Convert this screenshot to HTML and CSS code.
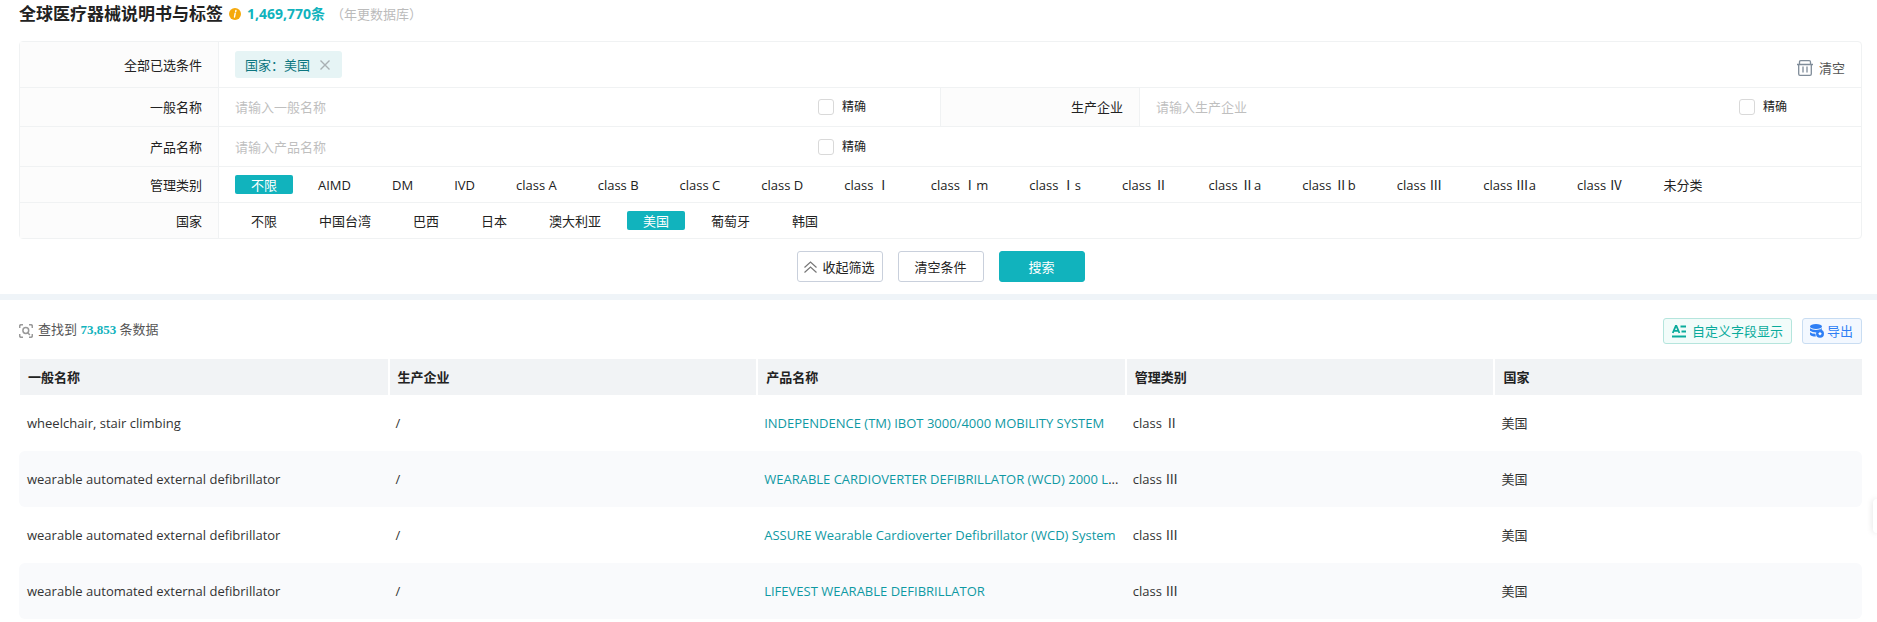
FILE: index.html
```html
<!DOCTYPE html>
<html lang="zh-CN">
  <head>
    <meta charset="UTF-8" />
    <meta name="viewport" content="width=device-width, initial-scale=1.0" />
    <title>全球医疗器械说明书与标签</title>
    <link rel="stylesheet" href="styles.css">
  </head>
  <body>
    <!-- Page title -->
    <header class="page-title">
      <h1>全球医疗器械说明书与标签</h1>
      <svg class="info-icon" width="12" height="12" viewBox="0 0 12 12">
        <circle cx="6" cy="6" r="6" fill="#f5a90c" />
        <path d="M6.9 2.5l-.2 1.1M6.2 5.1L5.5 9" stroke="#fff" stroke-width="1.4" stroke-linecap="round" />
      </svg>
      <strong class="total">1,469,770条</strong>
      <span class="note">（年更数据库）</span>
    </header>

    <!-- Search filters -->
    <form class="filter">
      <div class="filter-box">
        <div class="row row-selected">
          <div class="label">全部已选条件</div>
          <div class="cell cell-wide">
            <span class="tag">
              国家：美国
              <button type="button" class="tag-close" aria-label="移除">
                <svg width="10" height="10" viewBox="0 0 10 10">
                  <path d="M.5 .5l9 9M9.5 .5l-9 9" stroke="#a9b0b3" stroke-width="1.4" />
                </svg>
              </button>
            </span>
            <button type="button" class="clear">
              <svg width="16" height="16" viewBox="0 0 16 16" fill="none" stroke="#7f8c99" stroke-width="1.3">
                <path d="M0 4.5h16M2.5 4.5V2q0-1.300 1.300-1.300h8.400q1.300 0 1.300 1.300v2.500M1.700 4.500v9.500q0 1.300 1.300 1.300h10q1.300 0 1.300-1.300V4.500M6 6.500v6M10 6.500v6" />
              </svg>
              清空
            </button>
          </div>
        </div>

        <div class="row row-input">
          <label class="label" for="generic-name">一般名称</label>
          <div class="cell">
            <input type="text" id="generic-name" class="text-input" placeholder="请输入一般名称" />
            <label class="exact"><input type="checkbox" />精确</label>
          </div>
          <label class="label label-middle" for="company">生产企业</label>
          <div class="cell">
            <input type="text" id="company" class="text-input" placeholder="请输入生产企业" />
            <label class="exact"><input type="checkbox" />精确</label>
          </div>
        </div>

        <div class="row row-single">
          <label class="label" for="product-name">产品名称</label>
          <div class="cell">
            <input type="text" id="product-name" class="text-input" placeholder="请输入产品名称" />
            <label class="exact"><input type="checkbox" />精确</label>
          </div>
        </div>

        <div class="row row-option">
          <div class="label">管理类别</div>
          <div class="cell cell-wide cell-class">
            <button type="button" class="option active">不限</button>
            <button type="button" class="option">AIMD</button>
            <button type="button" class="option">DM</button>
            <button type="button" class="option">IVD</button>
            <button type="button" class="option">class A</button>
            <button type="button" class="option">class B</button>
            <button type="button" class="option">class C</button>
            <button type="button" class="option">class D</button>
            <button type="button" class="option">class Ⅰ</button>
            <button type="button" class="option">class Ⅰm</button>
            <button type="button" class="option">class Ⅰs</button>
            <button type="button" class="option">class Ⅱ</button>
            <button type="button" class="option">class Ⅱa</button>
            <button type="button" class="option">class Ⅱb</button>
            <button type="button" class="option">class Ⅲ</button>
            <button type="button" class="option">class Ⅲa</button>
            <button type="button" class="option">class Ⅳ</button>
            <button type="button" class="option">未分类</button>
          </div>
        </div>

        <div class="row row-option">
          <div class="label">国家</div>
          <div class="cell cell-wide">
            <button type="button" class="option">不限</button>
            <button type="button" class="option">中国台湾</button>
            <button type="button" class="option">巴西</button>
            <button type="button" class="option">日本</button>
            <button type="button" class="option">澳大利亚</button>
            <button type="button" class="option active">美国</button>
            <button type="button" class="option">葡萄牙</button>
            <button type="button" class="option">韩国</button>
          </div>
        </div>
      </div>

      <div class="actions">
        <button type="button" class="button">
          <svg width="13" height="12" viewBox="0 0 13 12" fill="none" stroke="#777" stroke-width="1.2">
            <path d="M.5 6.5l6-5.5 6 5.5M.5 11.5l6-5.5 6 5.5" />
          </svg>
          收起筛选
        </button>
        <button type="reset" class="button">清空条件</button>
        <button type="button" class="button button-primary">搜索</button>
      </div>
    </form>

    <!-- Results -->
    <main class="results">
      <div class="toolbar">
        <svg width="14" height="14" viewBox="0 0 14 14" fill="none" stroke="#999" stroke-width="1.5">
          <path d="M.7 4V2.2Q.7 .7 2.2 .7H4M10 .7h1.8q1.5 0 1.5 1.5V4M13.3 10v1.8q0 1.5-1.5 1.5H10M4 13.3H2.2Q.7 13.3 .7 11.8V10" />
          <circle cx="6.8" cy="6.5" r="2.9" />
          <path d="M8.8 8.7l2 2.2" />
        </svg>
        <p class="count">查找到 <strong>73,853</strong> 条数据</p>
        <button type="button" class="tool tool-green">
          <svg width="14" height="13" viewBox="0 0 14 13" fill="none" stroke="#0aab9c">
            <path d="M.8 8L3.8 1h.6L7.4 8M2 5.8h4.2" stroke-width="1.8" />
            <path d="M8.5 1.5H14M9.5 6.5H14M0 11.5h14" stroke-width="2" />
          </svg>
          自定义字段显示
        </button>
        <button type="button" class="tool tool-blue">
          <svg width="14" height="14" viewBox="0 0 14 14" fill="#2f7ff5">
            <ellipse cx="6" cy="2.5" rx="6" ry="2.5" />
            <path d="M0 4.2q2 1.8 6 1.8t6-1.8v1.6Q8 5 6.500 8.500Q2 8.500 0 6.800z" />
            <path d="M0 8.200q2 1.500 5.500 1.600l.3 2.700Q1 12.500 0 10.500z" />
            <circle cx="10" cy="9.800" r="4" />
            <path d="M10 8l1.800 1.800-1.800 1.800-1.800-1.800z" fill="#fff" />
          </svg>
          导出
        </button>
      </div>

      <table class="data-table">
        <thead>
          <tr>
            <th>一般名称</th>
            <th>生产企业</th>
            <th>产品名称</th>
            <th>管理类别</th>
            <th>国家</th>
          </tr>
        </thead>
        <tbody>
          <tr>
            <td>wheelchair, stair climbing</td>
            <td>/</td>
            <td><a href="#">INDEPENDENCE (TM) IBOT 3000/4000 MOBILITY SYSTEM</a></td>
            <td>class Ⅱ</td>
            <td>美国</td>
          </tr>
          <tr>
            <td>wearable automated external defibrillator</td>
            <td>/</td>
            <td><a href="#">WEARABLE CARDIOVERTER DEFIBRILLATOR (WCD) 2000 L</a>...</td>
            <td>class Ⅲ</td>
            <td>美国</td>
          </tr>
          <tr>
            <td>wearable automated external defibrillator</td>
            <td>/</td>
            <td><a href="#">ASSURE Wearable Cardioverter Defibrillator (WCD) System</a></td>
            <td>class Ⅲ</td>
            <td>美国</td>
          </tr>
          <tr>
            <td>wearable automated external defibrillator</td>
            <td>/</td>
            <td><a href="#">LIFEVEST WEARABLE DEFIBRILLATOR</a></td>
            <td>class Ⅲ</td>
            <td>美国</td>
          </tr>
        </tbody>
      </table>
    </main>

    <!-- Floating side tab -->
    <div class="side-tab"></div>
  </body>
</html>
```
FILE: styles.css
```css
* {
  box-sizing: border-box;
}
body {
  margin: 0;
  font-family: "Open Sans", "Noto Sans CJK SC", sans-serif;
  font-size: 13px;
  line-height: 18px;
  color: #222;
  background-color: #fff;
}
button,
input {
  font: inherit;
  color: inherit;
}
button {
  padding: 0;
  border: none;
  background: none;
  cursor: pointer;
}
.page-title {
  display: flex;
  align-items: center;
  height: 28px;
  padding: 0 19px;
}
.page-title h1 {
  margin: 0;
  font-size: 17px;
  line-height: 24px;
}
.info-icon {
  margin: 0 6px;
}
.total {
  font-size: 14px;
  color: #11b3bd;
}
.note {
  margin-left: 6px;
  color: #bbb;
}

/* Filters */
.filter {
  padding: 13px 15px 12px 19px;
  border-bottom: 6px solid #eff4f8;
}
.filter-box {
  border: 1px solid #f0f2f3;
  border-radius: 4px;
}
.row {
  display: grid;
  grid-template-columns: 199px 1fr 200px 1fr;
}
.row + .row {
  border-top: 1px solid #f0f2f3;
}
.row-selected {
  height: 45px;
}
.row-input {
  height: 39px;
}
.row-single {
  height: 40px;
}
.row-option {
  height: 36px;
}
.label {
  display: flex;
  align-items: center;
  justify-content: flex-end;
  padding-right: 16px;
  border-right: 1px solid #f0f2f3;
  background-color: #fcfcfc;
}
.label-middle {
  border-left: 1px solid #f0f2f3;
}
.cell {
  display: flex;
  align-items: center;
  min-width: 0;
  padding: 0 16px;
}
.cell-wide {
  grid-column: 2 / -1;
}
.tag {
  display: flex;
  align-items: center;
  gap: 10px;
  height: 27px;
  padding: 0 12px 0 10px;
  border-radius: 3px;
  color: #0b7680;
  background-color: #e6f4f5;
}
.tag-close {
  display: flex;
}
.clear {
  display: flex;
  align-items: center;
  gap: 6px;
  margin-left: auto;
  padding-top: 6px;
  color: #555;
}
.text-input {
  flex: 1;
  min-width: 0;
  height: 30px;
  padding: 0;
  border: none;
  outline: none;
  background: none;
}
.text-input::placeholder {
  color: #bfbfbf;
}
.exact {
  display: flex;
  align-items: center;
  gap: 8px;
  padding-right: 58px;
  font-size: 12px;
}
.exact input {
  width: 16px;
  height: 16px;
  margin: 0;
  border: 1px solid #d9d9d9;
  border-radius: 3px;
  background-color: #fff;
  appearance: none;
}
.exact input:checked {
  background-color: #11b3bd;
}
.row-option .cell {
  gap: 10px;
}
.row-option .cell-class {
  gap: 9px;
}
.option {
  height: 19px;
  padding: 0 16px;
  border-radius: 2px;
  line-height: 18px;
  white-space: nowrap;
}
.option.active {
  color: #fff;
  background-color: #11b3bd;
}
.actions {
  display: flex;
  justify-content: center;
  gap: 15px;
  margin-top: 12px;
}
.button {
  display: flex;
  align-items: center;
  justify-content: center;
  gap: 5px;
  width: 86px;
  height: 31px;
  border: 1px solid #c9d0dc;
  border-radius: 3px;
}
.button-primary {
  border-color: #11b3bd;
  color: #fff;
  background-color: #11b3bd;
}

/* Results */
.results {
  padding: 18px 15px 4px 19px;
}
.toolbar {
  display: flex;
  align-items: center;
  margin-bottom: 15px;
}
.count {
  margin: 0 auto 0 5px;
  padding-bottom: 4px;
  color: #555;
}
.count strong {
  font-family: "Liberation Serif", serif;
  color: #11b3bd;
}
.tool {
  display: flex;
  align-items: center;
  height: 26px;
  border: 1px solid;
  border-radius: 3px;
}
.tool-green {
  gap: 6px;
  padding: 0 8px;
  border-color: #b5e5dd;
  color: #0aab9c;
  background-color: #f2fcfa;
}
.tool-blue {
  gap: 3px;
  margin-left: 10px;
  padding: 0 8px 0 7px;
  border-color: #c9ddf2;
  color: #2f7ff5;
  background-color: #f3f8ff;
}
.data-table {
  width: 100%;
  border-collapse: separate;
  border-spacing: 0;
  table-layout: fixed;
}
.data-table th {
  height: 36px;
  padding: 0 8px;
  border-left: 2px solid #fff;
  text-align: left;
  background-color: #f1f3f5;
}
.data-table th:first-child {
  border-left-width: 1px;
}
.data-table td {
  height: 56px;
  padding: 0 4px 0 8px;
  overflow: hidden;
  color: #333;
  text-overflow: ellipsis;
  white-space: nowrap;
}
.data-table tr:nth-child(even) td {
  background-color: #f9fafc;
}
.data-table td:first-child {
  border-radius: 6px 0 0 6px;
}
.data-table td:last-child {
  border-radius: 0 6px 6px 0;
}
.data-table a {
  font-weight: 500;
  color: #0f99a3;
  text-decoration: none;
}
.side-tab {
  position: fixed;
  top: 499px;
  right: 0;
  width: 4px;
  height: 34px;
  border-radius: 4px 0 0 4px;
  background-color: #fff;
  box-shadow: 0 0 6px rgba(0, 0, 0, 0.15);
}
```
